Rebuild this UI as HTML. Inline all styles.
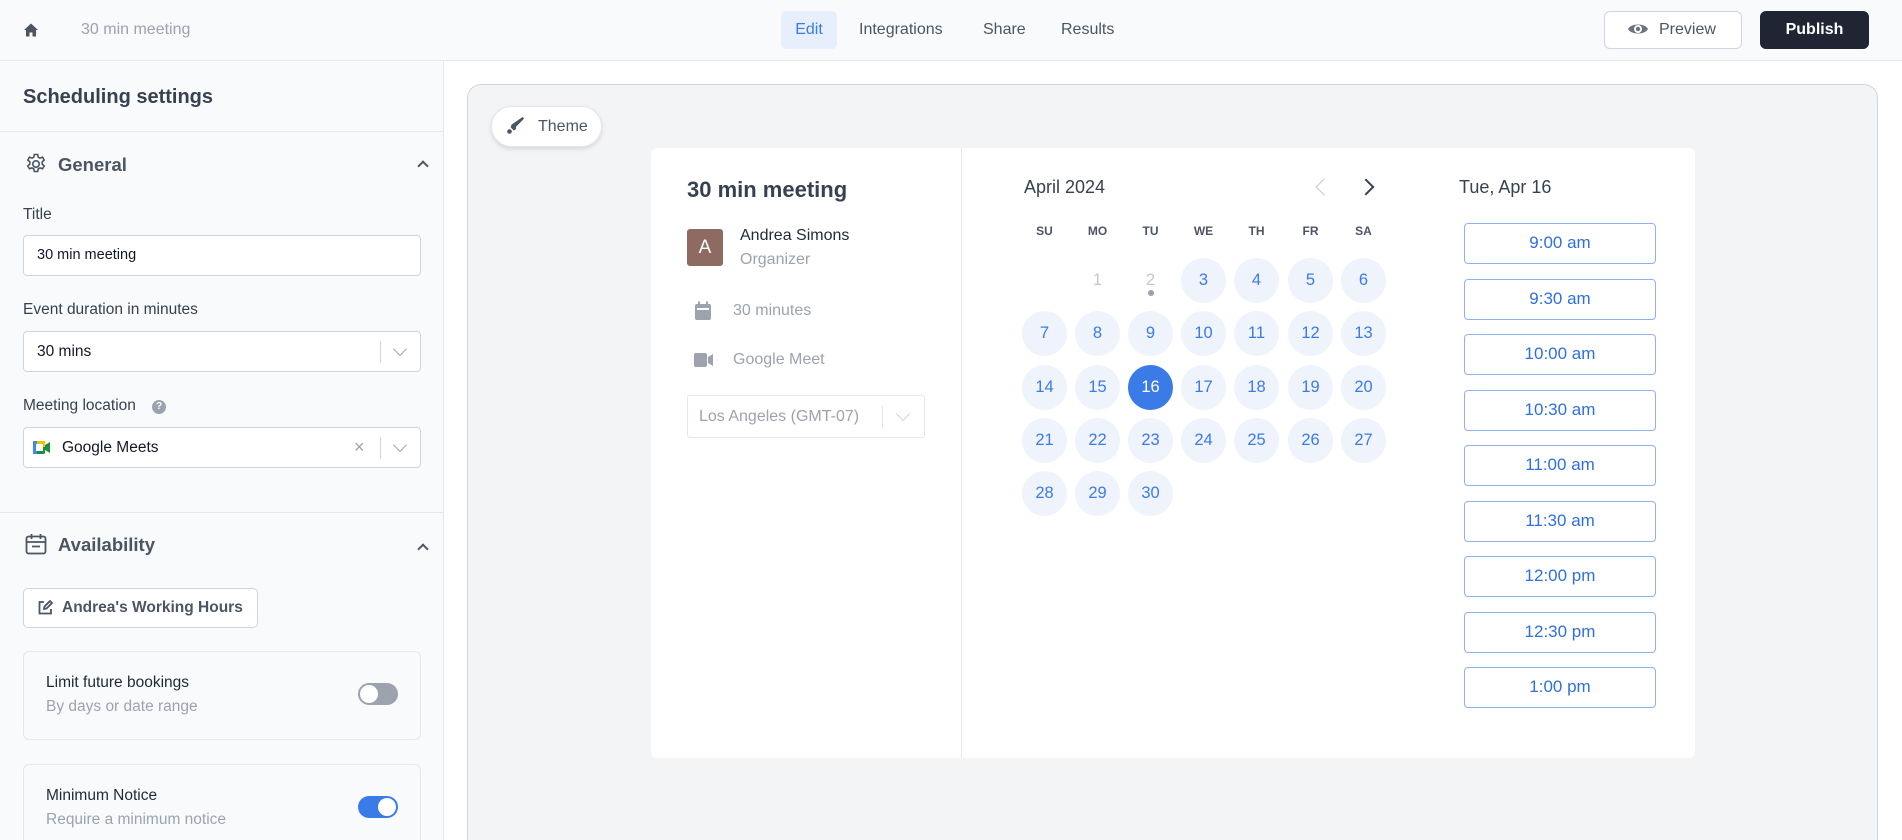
<!DOCTYPE html>
<html><head><meta charset="utf-8"><style>
*{box-sizing:border-box;margin:0;padding:0}
html,body{width:1902px;height:840px;overflow:hidden}
body{font-family:"Liberation Sans",sans-serif;background:#fff;color:#374151}
#w{position:relative;width:1902px;height:840px;overflow:hidden}
.a{position:absolute}
.top{left:0;top:0;width:1902px;height:61px;background:#f9fafb;border-bottom:1px solid #e5e7eb}
.nav{top:11px;height:38px;line-height:38px;font-size:16px;color:#4b5563}
.side{left:0;top:61px;width:444px;height:779px;background:#f9fafb;border-right:1px solid #e5e7eb}
.lbl{font-size:15.5px;color:#374151}
.inp{left:23px;width:398px;height:41px;background:#fff;border:1px solid #d1d5db;border-radius:4px;font-size:15.5px;color:#111827;line-height:39px;padding-left:13px}
.sep{width:1px;height:22px;background:#d1d5db;top:9px}
.chev{top:12px;width:10px;height:10px;border-right:1.5px solid #9ca3af;border-bottom:1.5px solid #9ca3af;transform:rotate(45deg)}
.card{left:23px;width:398px;background:#f9fafb;border:1px solid #e5e7eb;border-radius:6px}
.day{width:45px;height:45px;border-radius:50%;background:#eef3fc;color:#3b7be8;font-size:16.5px;text-align:center;line-height:45px}
.dh{font-size:12px;font-weight:bold;color:#4b5563;width:45px;text-align:center}
.slot{left:1464px;width:192px;height:41px;border:1.5px solid #8fb1ef;border-radius:4px;color:#2f6fe0;font-size:17px;text-align:center;line-height:38px;background:#fff}
</style></head><body><div id="w">
<div class="a top"></div>
<svg class="a" style="left:23px;top:22px" width="16" height="16" viewBox="0 0 16 16"><path d="M8 1.5 1 8h2v6.5h3.5v-4h3v4H13V8h2z" fill="#4b5563"/></svg>
<div class="a" style="left:81px;top:21px;font-size:16px;color:#9ca3af">30 min meeting</div>
<div class="a nav" style="left:781px;width:56px;background:#e7effc;border-radius:5px;color:#3b7be8;text-align:center">Edit</div>
<div class="a nav" style="left:859px">Integrations</div>
<div class="a nav" style="left:983px">Share</div>
<div class="a nav" style="left:1061px">Results</div>
<div class="a" style="left:1604px;top:11px;width:138px;height:38px;border:1px solid #d1d5db;border-radius:6px;background:#fff;font-size:16px;color:#4b5563;line-height:36px;padding-left:54px">Preview</div>
<svg class="a" style="left:1627px;top:21px" width="22" height="16" viewBox="0 0 22 16"><path d="M1 8C4 2 18 2 21 8 18 14 4 14 1 8z" fill="#6b7280"/><circle cx="11" cy="8" r="4" fill="#fff"/><circle cx="11" cy="8" r="2.2" fill="#6b7280"/></svg>
<div class="a" style="left:1760px;top:11px;width:109px;height:38px;border-radius:6px;background:#1f2533;font-size:16px;color:#fff;line-height:38px;text-align:center;font-weight:bold">Publish</div>

<div class="a side"></div>
<div class="a" style="left:23px;top:86px;font-size:20px;font-weight:bold;color:#374151">Scheduling settings</div>
<div class="a" style="left:0;top:131px;width:444px;height:1px;background:#e5e7eb"></div>
<svg class="a" style="left:24px;top:152px" width="24" height="24" viewBox="0 0 24 24" fill="none" stroke="#4b5563" stroke-width="1.6"><circle cx="12" cy="12" r="3.2"/><path d="M10.3 2.5h3.4l.5 2.6 1.8 1 2.5-.9 1.7 2.9-2 1.8v2.2l2 1.8-1.7 2.9-2.5-.9-1.8 1-.5 2.6h-3.4l-.5-2.6-1.8-1-2.5.9-1.7-2.9 2-1.8V9.9l-2-1.8 1.7-2.9 2.5.9 1.8-1z"/></svg>
<div class="a" style="left:58px;top:154px;font-size:18.5px;font-weight:bold;color:#4b5563">General</div>
<div class="a" style="left:419px;top:162px;width:8px;height:8px;border-left:2px solid #4b5563;border-top:2px solid #4b5563;transform:rotate(45deg)"></div>
<div class="a lbl" style="left:23px;top:206px">Title</div>
<div class="a inp" style="top:235px;font-size:14.5px">30 min meeting</div>
<div class="a lbl" style="left:23px;top:301px">Event duration in minutes</div>
<div class="a inp" style="top:331px">30 mins<div class="a sep" style="left:356px"></div><div class="a chev" style="left:371px"></div></div>
<div class="a lbl" style="left:23px;top:397px">Meeting location</div>
<div class="a" style="left:152px;top:400px;width:14px;height:14px;border-radius:50%;background:#9ca3af;color:#fff;font-size:10px;font-weight:bold;text-align:center;line-height:14px">?</div>
<div class="a inp" style="top:427px;padding-left:38px">Google Meets
<svg class="a" style="left:9px;top:12px" width="18" height="15" viewBox="0 0 18 15"><rect x="0" y="1" width="12" height="13" rx="1.5" fill="#1e8e3e"/><rect x="0" y="1" width="12" height="6" fill="#fbbc04"/><rect x="0" y="1" width="4" height="13" fill="#4285f4"/><rect x="3" y="4" width="7" height="7" fill="#fff"/><path d="M12 5l5-3v11l-5-3z" fill="#1e8e3e"/></svg>
<div class="a" style="left:330px;top:0;color:#9ca3af;font-size:18px">×</div><div class="a sep" style="left:356px"></div><div class="a chev" style="left:371px"></div></div>
<div class="a" style="left:0;top:512px;width:444px;height:1px;background:#e5e7eb"></div>
<svg class="a" style="left:25px;top:533px" width="22" height="22" viewBox="0 0 22 22" fill="none" stroke="#4b5563" stroke-width="1.8"><rect x="1.5" y="3.5" width="19" height="17" rx="2"/><path d="M1.5 9h19M6.5 1v5M15.5 1v5M7 13.5h8"/></svg>
<div class="a" style="left:58px;top:534px;font-size:18.5px;font-weight:bold;color:#4b5563">Availability</div>
<div class="a" style="left:419px;top:545px;width:8px;height:8px;border-left:2px solid #4b5563;border-top:2px solid #4b5563;transform:rotate(45deg)"></div>
<div class="a" style="left:23px;top:588px;width:235px;height:40px;border:1px solid #d1d5db;border-radius:5px;background:#fff;font-size:15.5px;font-weight:bold;color:#4b5563;line-height:38px;padding-left:38px">Andrea's Working Hours</div>
<svg class="a" style="left:38px;top:600px" width="15" height="15" viewBox="0 0 15 15" fill="none" stroke="#4b5563" stroke-width="1.8"><path d="M6 2H1.5v11.5H13V9"/><path d="M6 9l.5-2.5L12 1l2 2-5.5 5.5z"/></svg>
<div class="a card" style="top:651px;height:89px"></div>
<div class="a" style="left:46px;top:674px;font-size:15.5px;color:#1f2937">Limit future bookings</div>
<div class="a" style="left:46px;top:698px;font-size:15.5px;color:#9ca3af">By days or date range</div>
<div class="a" style="left:358px;top:683px;width:40px;height:22px;border-radius:11px;background:#9ca3af"><div class="a" style="left:2px;top:2px;width:18px;height:18px;border-radius:50%;background:#fff"></div></div>
<div class="a card" style="top:764px;height:76px;border-bottom:none;border-radius:6px 6px 0 0"></div>
<div class="a" style="left:46px;top:787px;font-size:15.5px;color:#1f2937">Minimum Notice</div>
<div class="a" style="left:46px;top:811px;font-size:15.5px;color:#9ca3af">Require a minimum notice</div>
<div class="a" style="left:358px;top:796px;width:40px;height:22px;border-radius:11px;background:#3b7be8"><div class="a" style="left:20px;top:2px;width:18px;height:18px;border-radius:50%;background:#fff"></div></div>

<div class="a" style="left:467px;top:84px;width:1411px;height:756px;background:#f3f4f6;border:1.5px solid #d1d5db;border-bottom:none;border-radius:14px 14px 0 0"></div>
<div class="a" style="left:491px;top:106px;width:111px;height:41px;border-radius:21px;background:#fff;border:1px solid #e5e7eb;box-shadow:0 2px 5px rgba(0,0,0,.12);font-size:16px;color:#4b5563;line-height:39px;padding-left:46px">Theme</div>
<svg class="a" style="left:506px;top:117px" width="18" height="18" viewBox="0 0 18 18"><path d="M16.5 1.5 8 10l-1.5-1.5z M7 9l2 2-1 1-2-2z" fill="#4b5563" stroke="#4b5563" stroke-width="2.5" stroke-linejoin="round"/><circle cx="3.5" cy="14.5" r="2.3" fill="#4b5563"/></svg>

<div class="a" style="left:651px;top:148px;width:1044px;height:610px;background:#fff;border-radius:6px"></div>
<div class="a" style="left:961px;top:148px;width:1px;height:610px;background:#e5e7eb"></div>
<div class="a" style="left:687px;top:177px;font-size:22px;font-weight:bold;color:#374151">30 min meeting</div>
<div class="a" style="left:687px;top:229px;width:36px;height:37px;border-radius:3px;background:#8d6b62;color:#fff;font-size:19px;text-align:center;line-height:37px">A</div>
<div class="a" style="left:740px;top:227px;font-size:16px;color:#1f2937">Andrea Simons</div>
<div class="a" style="left:740px;top:251px;font-size:16px;color:#9ca3af">Organizer</div>
<svg class="a" style="left:694px;top:301px" width="18" height="20" viewBox="0 0 18 20"><rect x="1" y="3" width="16" height="16" rx="2" fill="#9ca3af"/><rect x="4" y="0.5" width="2" height="4" fill="#9ca3af"/><rect x="12" y="0.5" width="2" height="4" fill="#9ca3af"/><rect x="3" y="7" width="12" height="2" fill="#fff"/></svg>
<div class="a" style="left:733px;top:302px;font-size:16px;color:#9ca3af">30 minutes</div>
<svg class="a" style="left:694px;top:352px" width="20" height="16" viewBox="0 0 20 16"><rect x="0" y="1" width="13" height="14" rx="2" fill="#9ca3af"/><path d="M14 5l5-3v12l-5-3z" fill="#9ca3af"/></svg>
<div class="a" style="left:733px;top:351px;font-size:16px;color:#9ca3af">Google Meet</div>
<div class="a" style="left:687px;top:395px;width:238px;height:43px;border:1px solid #e5e7eb;border-radius:3px;font-size:16px;color:#9ca3af;line-height:41px;padding-left:11px">Los Angeles (GMT-07)<div class="a sep" style="left:194px;top:10px;background:#e5e7eb"></div><div class="a chev" style="left:210px;top:13px;border-color:#d1d5db"></div></div>

<div class="a" style="left:1024px;top:177px;font-size:18px;color:#374151">April 2024</div>
<div class="a" style="left:1318px;top:181px;width:12px;height:12px;border-left:1.8px solid #c4c8ce;border-bottom:1.8px solid #c4c8ce;transform:rotate(45deg)"></div>
<div class="a" style="left:1360px;top:181px;width:12px;height:12px;border-right:2px solid #374151;border-top:2px solid #374151;transform:rotate(45deg)"></div>
<div class="a dh" style="left:1022px;top:224px">SU</div><div class="a dh" style="left:1075px;top:224px">MO</div><div class="a dh" style="left:1128px;top:224px">TU</div><div class="a dh" style="left:1181px;top:224px">WE</div><div class="a dh" style="left:1234px;top:224px">TH</div><div class="a dh" style="left:1288px;top:224px">FR</div><div class="a dh" style="left:1341px;top:224px">SA</div>
<div class="a" style="left:1075px;top:258px;width:45px;height:45px;color:#c4c8ce;font-size:16.5px;text-align:center;line-height:45px">1</div>
<div class="a" style="left:1128px;top:258px;width:45px;height:45px;color:#c4c8ce;font-size:16.5px;text-align:center;line-height:45px">2</div>
<div class="a" style="left:1148px;top:290px;width:6px;height:6px;border-radius:50%;background:#9ca3af"></div>
<div class="a day" style="left:1181px;top:258px">3</div><div class="a day" style="left:1234px;top:258px">4</div><div class="a day" style="left:1288px;top:258px">5</div><div class="a day" style="left:1341px;top:258px">6</div>
<div class="a day" style="left:1022px;top:311px">7</div><div class="a day" style="left:1075px;top:311px">8</div><div class="a day" style="left:1128px;top:311px">9</div><div class="a day" style="left:1181px;top:311px">10</div><div class="a day" style="left:1234px;top:311px">11</div><div class="a day" style="left:1288px;top:311px">12</div><div class="a day" style="left:1341px;top:311px">13</div>
<div class="a day" style="left:1022px;top:365px">14</div><div class="a day" style="left:1075px;top:365px">15</div><div class="a day" style="left:1128px;top:365px;background:#3b7be8;color:#fff">16</div><div class="a day" style="left:1181px;top:365px">17</div><div class="a day" style="left:1234px;top:365px">18</div><div class="a day" style="left:1288px;top:365px">19</div><div class="a day" style="left:1341px;top:365px">20</div>
<div class="a day" style="left:1022px;top:418px">21</div><div class="a day" style="left:1075px;top:418px">22</div><div class="a day" style="left:1128px;top:418px">23</div><div class="a day" style="left:1181px;top:418px">24</div><div class="a day" style="left:1234px;top:418px">25</div><div class="a day" style="left:1288px;top:418px">26</div><div class="a day" style="left:1341px;top:418px">27</div>
<div class="a day" style="left:1022px;top:471px">28</div><div class="a day" style="left:1075px;top:471px">29</div><div class="a day" style="left:1128px;top:471px">30</div>

<div class="a" style="left:1459px;top:177px;font-size:18px;color:#374151">Tue, Apr 16</div>
<div class="a slot" style="top:223px">9:00 am</div>
<div class="a slot" style="top:279px">9:30 am</div>
<div class="a slot" style="top:334px">10:00 am</div>
<div class="a slot" style="top:390px">10:30 am</div>
<div class="a slot" style="top:445px">11:00 am</div>
<div class="a slot" style="top:501px">11:30 am</div>
<div class="a slot" style="top:556px">12:00 pm</div>
<div class="a slot" style="top:612px">12:30 pm</div>
<div class="a slot" style="top:667px">1:00 pm</div>
</div></body></html>
